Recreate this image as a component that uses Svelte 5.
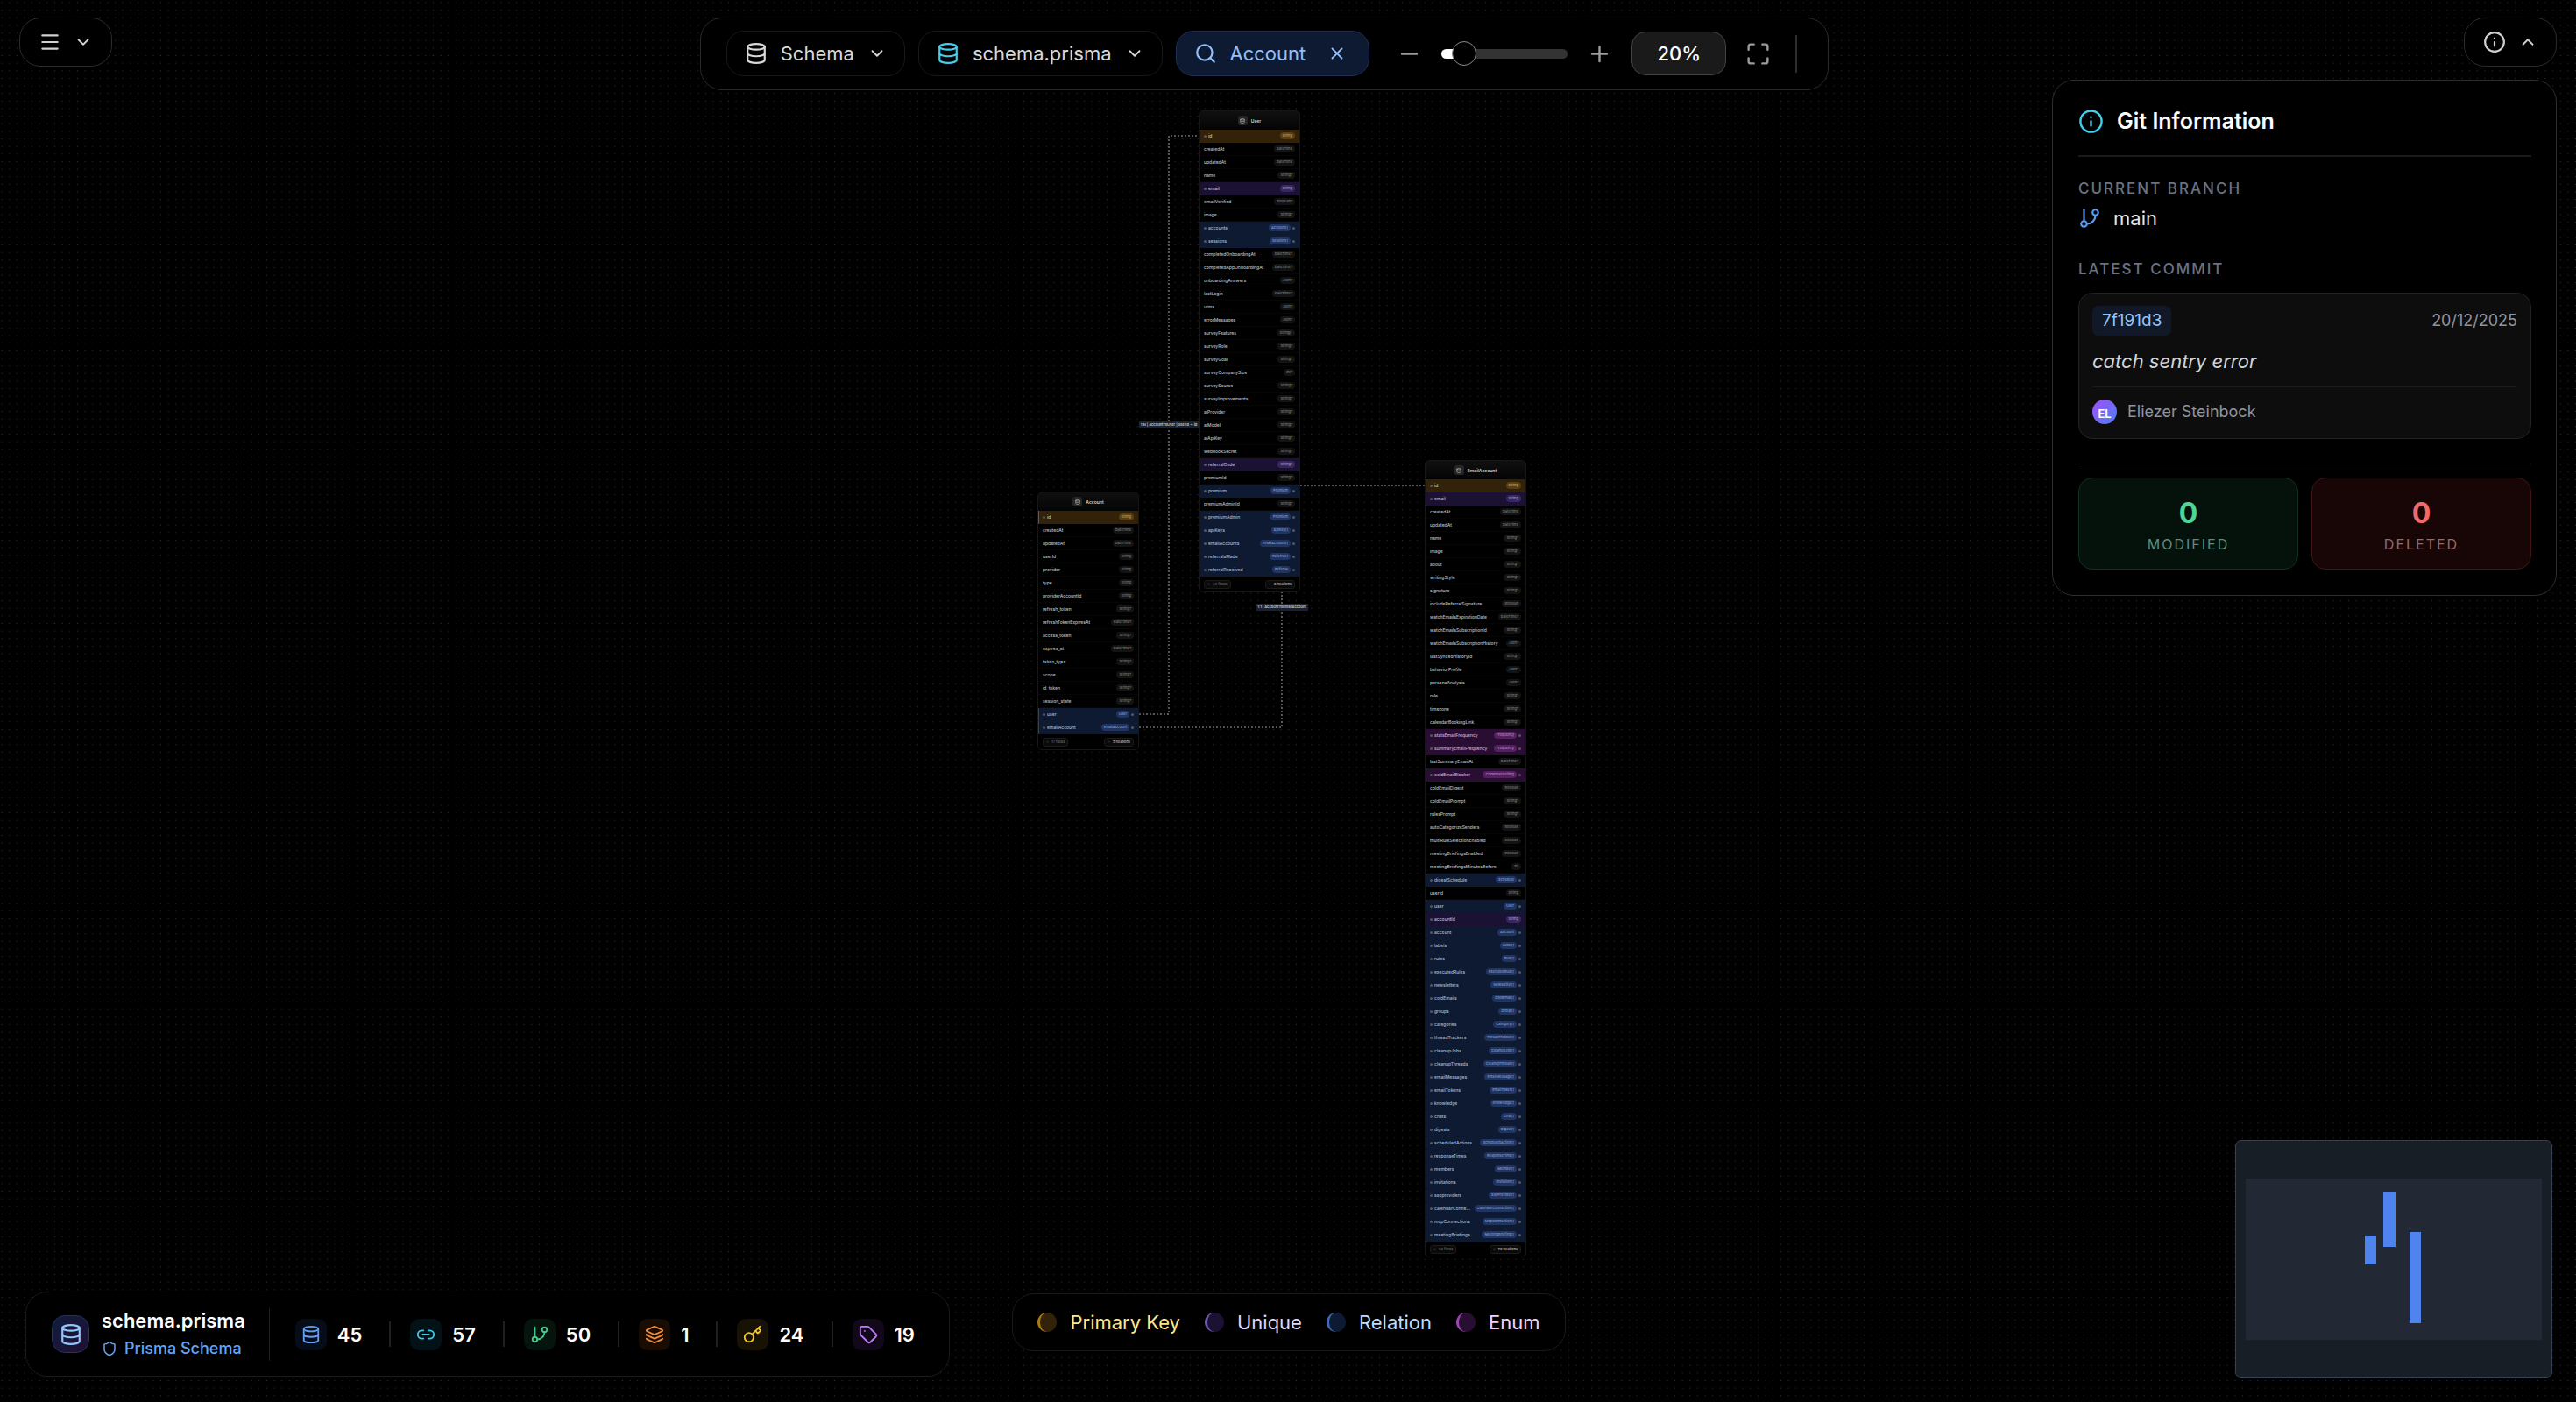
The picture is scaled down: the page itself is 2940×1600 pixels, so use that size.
<script lang="ts">
	type Kind = 'pk' | 'unique' | 'relation' | 'enum' | '';
	type Field = { name: string; type: string; kind: Kind };
	type Model = { name: string; x: number; y: number; relations: number; fields: Field[] };

	const kinds: Record<string, Kind> = { '*': 'pk', '!': 'unique', '>': 'relation', '#': 'enum' };

	// One "name:type" per field; the first character marks the kind
	function parse(source: string): Field[] {
		return source
			.trim()
			.split(/\s+/)
			.map((entry) => {
				const kind = kinds[entry[0]] ?? '';
				const [name, type] = (kind ? entry.slice(1) : entry).split(':');
				return { name, type, kind };
			});
	}

	const models: Model[] = [
		{
			name: 'User',
			x: 1368,
			y: 126,
			relations: 8,
			fields: parse(`
				*id:String createdAt:DateTime updatedAt:DateTime name:String? !email:String
				emailVerified:Boolean? image:String? >accounts:Account[] >sessions:Session[]
				completedOnboardingAt:DateTime? completedAppOnboardingAt:DateTime?
				onboardingAnswers:Json? lastLogin:DateTime? utms:Json? errorMessages:Json?
				surveyFeatures:String[] surveyRole:String? surveyGoal:String?
				surveyCompanySize:Int? surveySource:String? surveyImprovements:String?
				aiProvider:String? aiModel:String? aiApiKey:String? webhookSecret:String?
				!referralCode:String? premiumId:String? >premium:Premium premiumAdminId:String?
				>premiumAdmin:Premium >apiKeys:ApiKey[] >emailAccounts:EmailAccount[]
				>referralsMade:Referral[] >referralReceived:Referral
			`),
		},
		{
			name: 'Account',
			x: 1184,
			y: 561,
			relations: 2,
			fields: parse(`
				*id:String createdAt:DateTime updatedAt:DateTime userId:String provider:String
				type:String providerAccountId:String refresh_token:String?
				refreshTokenExpiresAt:DateTime? access_token:String? expires_at:DateTime?
				token_type:String? scope:String? id_token:String? session_state:String?
				>user:User >emailAccount:EmailAccount
			`),
		},
		{
			name: 'EmailAccount',
			x: 1626,
			y: 525,
			relations: 28,
			fields: parse(`
				*id:String !email:String createdAt:DateTime updatedAt:DateTime name:String?
				image:String? about:String? writingStyle:String? signature:String?
				includeReferralSignature:Boolean watchEmailsExpirationDate:DateTime?
				watchEmailsSubscriptionId:String? watchEmailsSubscriptionHistory:Json?
				lastSyncedHistoryId:String? behaviorProfile:Json? personaAnalysis:Json?
				role:String? timezone:String? calendarBookingLink:String?
				#statsEmailFrequency:Frequency #summaryEmailFrequency:Frequency
				lastSummaryEmailAt:DateTime? #coldEmailBlocker:ColdEmailSetting
				coldEmailDigest:Boolean coldEmailPrompt:String? rulesPrompt:String?
				autoCategorizeSenders:Boolean multiRuleSelectionEnabled:Boolean
				meetingBriefingsEnabled:Boolean meetingBriefingsMinutesBefore:Int
				>digestSchedule:Schedule userId:String >user:User !accountId:String
				>account:Account >labels:Label[] >rules:Rule[] >executedRules:ExecutedRule[]
				>newsletters:Newsletter[] >coldEmails:ColdEmail[] >groups:Group[]
				>categories:Category[] >threadTrackers:ThreadTracker[]
				>cleanupJobs:CleanupJob[] >cleanupThreads:CleanupThread[]
				>emailMessages:EmailMessage[] >emailTokens:EmailToken[]
				>knowledge:Knowledge[] >chats:Chat[] >digests:Digest[]
				>scheduledActions:ScheduledAction[] >responseTimes:ResponseTime[]
				>members:Member[] >invitations:Invitation[] >ssoproviders:SsoProvider[]
				>calendarConnections:CalendarConnection[] >mcpConnections:McpConnection[]
				>meetingBriefings:MeetingBriefing[]
			`),
		},
	];

	const edges = [
		{ path: 'M1300 815H1334V155H1368', label: '1:N | AccountToUser | userId → id', x: 1334, y: 485 },
		{ path: 'M1300 830H1463V554H1626', label: '1:1 | AccountToEmailAccount', x: 1463, y: 693 },
	];

	const stats = [
		{ icon: 'database', value: 45, tone: 'blue', label: 'Models' },
		{ icon: 'link', value: 57, tone: 'cyan', label: 'Relations' },
		{ icon: 'branch', value: 50, tone: 'green', label: 'Connections' },
		{ icon: 'layers', value: 1, tone: 'orange', label: 'Layers' },
		{ icon: 'key', value: 24, tone: 'yellow', label: 'Keys' },
		{ icon: 'tag', value: 19, tone: 'purple', label: 'Enums' },
	];

	const legend: { name: string; kind: Kind }[] = [
		{ name: 'Primary Key', kind: 'pk' },
		{ name: 'Unique', kind: 'unique' },
		{ name: 'Relation', kind: 'relation' },
		{ name: 'Enum', kind: 'enum' },
	];

	const icons: Record<string, string[]> = {
		menu: ['M4 5h16', 'M4 12h16', 'M4 19h16'],
		down: ['m6 9 6 6 6-6'],
		up: ['m18 15-6-6-6 6'],
		database: [
			'M3 5a9 3 0 1 0 18 0a9 3 0 1 0-18 0',
			'M3 5v14a9 3 0 0 0 18 0V5',
			'M3 12a9 3 0 0 0 18 0',
		],
		search: ['M3 11a8 8 0 1 0 16 0a8 8 0 1 0-16 0', 'm21 21-4.3-4.3'],
		close: ['M18 6 6 18', 'm6 6 12 12'],
		minus: ['M5 12h14'],
		plus: ['M5 12h14', 'M12 5v14'],
		maximize: [
			'M8 3H5a2 2 0 0 0-2 2v3',
			'M21 8V5a2 2 0 0 0-2-2h-3',
			'M3 16v3a2 2 0 0 0 2 2h3',
			'M16 21h3a2 2 0 0 0 2-2v-3',
		],
		info: ['M2 12a10 10 0 1 0 20 0a10 10 0 1 0-20 0', 'M12 16v-4', 'M12 8h.01'],
		branch: [
			'M6 3v12',
			'M15 6a3 3 0 1 0 6 0a3 3 0 1 0-6 0',
			'M3 18a3 3 0 1 0 6 0a3 3 0 1 0-6 0',
			'M18 9a9 9 0 0 1-9 9',
		],
		link: ['M9 17H7A5 5 0 0 1 7 7h2', 'M15 7h2a5 5 0 1 1 0 10h-2', 'M8 12h8'],
		layers: [
			'M12.83 2.18a2 2 0 0 0-1.66 0L2.6 6.08a1 1 0 0 0 0 1.83l8.58 3.91a2 2 0 0 0 1.66 0l8.58-3.9a1 1 0 0 0 0-1.83z',
			'M2 12a1 1 0 0 0 .58.91l8.6 3.91a2 2 0 0 0 1.65 0l8.58-3.9A1 1 0 0 0 22 12',
			'M2 17a1 1 0 0 0 .58.91l8.6 3.91a2 2 0 0 0 1.65 0l8.58-3.9A1 1 0 0 0 22 17',
		],
		key: [
			'm15.5 7.5 2.3 2.3a1 1 0 0 0 1.4 0l2.1-2.1a1 1 0 0 0 0-1.4L19 4',
			'm21 2-9.6 9.6',
			'M2 15.5a5.5 5.5 0 1 0 11 0a5.5 5.5 0 1 0-11 0',
		],
		tag: [
			'M12.586 2.586A2 2 0 0 0 11.172 2H4a2 2 0 0 0-2 2v7.172a2 2 0 0 0 .586 1.414l8.704 8.704a2.426 2.426 0 0 0 3.42 0l6.58-6.58a2.426 2.426 0 0 0 0-3.42z',
			'M7.5 7.5h.01',
		],
		shield: [
			'M20 13c0 5-3.5 7.5-7.66 8.95a1 1 0 0 1-.67-.01C7.5 20.5 4 18 4 13V6a1 1 0 0 1 1-1c2 0 4.5-1.2 6.24-2.72a1.17 1.17 0 0 1 1.52 0C14.51 3.81 17 5 19 5a1 1 0 0 1 1 1z',
		],
	};

	const zoomMin = 10;
	const zoomMax = 110;
	let zoom = $state(20);
	let gitOpen = $state(true);
	const zoomFill = $derived(((zoom - zoomMin) / (zoomMax - zoomMin)) * 100);
</script>

{#snippet icon(name: string, size: string)}
	<svg class="icon {size}" viewBox="0 0 24 24" aria-hidden="true">
		{#each icons[name] as d}
			<path {d} />
		{/each}
	</svg>
{/snippet}

<main class="app">
	<div class="canvas">
		<svg class="wires" aria-hidden="true">
			<defs>
				<pattern id="dots" x="-2.3" y="-1.3" width="8.64" height="8.64" patternUnits="userSpaceOnUse">
					<circle cx="4.32" cy="4.32" r="0.5" />
				</pattern>
			</defs>
			<rect width="100%" height="100%" fill="url(#dots)" />
			{#each edges as edge}
				<path d={edge.path} />
			{/each}
		</svg>

		{#each models as model}
			<section class="node" style:left="{model.x}px" style:top="{model.y}px">
				<header>
					<span class="node-icon">{@render icon('database', 'i6')}</span>
					<h3>{model.name}</h3>
				</header>
				<ul>
					{#each model.fields as field}
						<li class={field.kind}>
							{#if field.kind}<i></i>{/if}
							<span class="name">{field.name}</span>
							<span class="type">{field.type}</span>
							{#if field.kind === 'relation' || field.kind === 'enum'}<i></i>{/if}
						</li>
					{/each}
				</ul>
				<footer>
					<span><i></i>{model.fields.length} fields</span>
					<span class="strong"><i></i>{model.relations} relations</span>
				</footer>
			</section>
		{/each}

		{#each edges as edge}
			<span class="edge-label" style:left="{edge.x}px" style:top="{edge.y}px">{edge.label}</span>
		{/each}
	</div>

	<div class="top">
		<div>
			<button class="round" type="button" aria-label="Menu">
				{@render icon('menu', 'i26')}
				{@render icon('down', 'i22')}
			</button>
		</div>

		<div class="toolbar" role="toolbar" aria-label="Diagram tools">
			<button class="pick" type="button">
				{@render icon('database', 'i26')}
				Schema
				{@render icon('down', 'i22')}
			</button>
			<button class="pick file" type="button">
				{@render icon('database', 'i26')}
				schema.prisma
				{@render icon('down', 'i22')}
			</button>
			<button class="pick active" type="button">
				{@render icon('search', 'i26')}
				Account
				{@render icon('close', 'i22')}
			</button>
			<div class="zoom">
				<button class="tool" type="button" aria-label="Zoom out" onclick={() => (zoom -= 5)}>
					{@render icon('minus', 'i29')}
				</button>
				<input
					type="range"
					min={zoomMin}
					max={zoomMax}
					bind:value={zoom}
					aria-label="Zoom"
					style:--fill="{zoomFill}%"
				/>
				<button class="tool" type="button" aria-label="Zoom in" onclick={() => (zoom += 5)}>
					{@render icon('plus', 'i29')}
				</button>
				<button class="level" type="button">{zoom}%</button>
				<button class="tool" type="button" aria-label="Fit view">
					{@render icon('maximize', 'i29')}
				</button>
			</div>
			<span class="rule"></span>
		</div>

		<div class="side">
			<button
				class="round"
				type="button"
				aria-label="Git information"
				aria-expanded={gitOpen}
				onclick={() => (gitOpen = !gitOpen)}
			>
				{@render icon('info', 'i26')}
				{@render icon(gitOpen ? 'up' : 'down', 'i22')}
			</button>

			{#if gitOpen}
				<aside class="git">
					<h2>{@render icon('info', 'i29')}Git Information</h2>
					<h4>Current branch</h4>
					<p class="branch">{@render icon('branch', 'i26')}main</p>
					<h4>Latest commit</h4>
					<article class="commit">
						<div class="commit-head">
							<code>7f191d3</code>
							<time datetime="2025-12-20">20/12/2025</time>
						</div>
						<p class="message">catch sentry error</p>
						<div class="author"><span class="avatar">EL</span>Eliezer Steinbock</div>
					</article>
					<div class="changes">
						<div class="change modified"><strong>0</strong><span>Modified</span></div>
						<div class="change deleted"><strong>0</strong><span>Deleted</span></div>
					</div>
				</aside>
			{/if}
		</div>
	</div>

	<div class="bottom">
		<div class="status">
			<span class="logo">{@render icon('database', 'i26')}</span>
			<div class="file-info">
				<strong>schema.prisma</strong>
				<span>{@render icon('shield', 'i18')}Prisma Schema</span>
			</div>
			<ul class="stats">
				{#each stats as stat}
					<li title={stat.label}>
						<span class="badge {stat.tone}">{@render icon(stat.icon, 'i22')}</span>
						{stat.value}
					</li>
				{/each}
			</ul>
		</div>

		<ul class="legend">
			{#each legend as item}
				<li class={item.kind}><i></i>{item.name}</li>
			{/each}
		</ul>

		<svg class="minimap" viewBox="0 0 360 270" role="img" aria-label="Minimap">
			<rect class="view" x="11" y="43" width="338" height="184" />
			<rect x="147" y="108" width="13" height="33" />
			<rect x="168" y="58" width="14" height="63" />
			<rect x="198" y="104" width="13" height="104" />
		</svg>
	</div>
</main>

<style>
	:global(body) {
		margin: 0;
		background: #000;
	}

	.app {
		position: relative;
		display: flex;
		flex-direction: column;
		justify-content: space-between;
		min-height: 100vh;
		overflow: hidden;
		background: #000;
		color: #fff;
		font-family: Inter, 'Liberation Sans', sans-serif;
		font-size: 22px;
		line-height: 32px;
	}

	.app *,
	.app {
		box-sizing: border-box;
	}

	button {
		padding: 0;
		border: 0;
		background: none;
		color: inherit;
		font: inherit;
		cursor: pointer;
	}

	ul,
	h2,
	h3,
	h4,
	p {
		margin: 0;
		padding: 0;
		list-style: none;
		font-weight: inherit;
	}

	.icon {
		display: block;
		flex: none;
		fill: none;
		stroke: currentColor;
		stroke-width: 2;
		stroke-linecap: round;
		stroke-linejoin: round;
	}

	.i6 { width: 6px; height: 6px; }
	.i18 { width: 18px; height: 18px; }
	.i22 { width: 22px; height: 22px; }
	.i26 { width: 26px; height: 26px; }
	.i29 { width: 29px; height: 29px; }

	/* Canvas */
	.canvas {
		position: absolute;
		inset: 0;
	}

	.wires {
		display: block;
		width: 100%;
		height: 100%;
	}

	.wires circle {
		fill: #4a4a4a;
	}

	.wires > path {
		fill: none;
		stroke: #a2a6ad;
		stroke-width: 1;
		stroke-dasharray: 2 2;
	}

	.node {
		position: absolute;
		width: 116px;
		border: 1px solid #161616;
		border-radius: 5px;
		overflow: hidden;
		background: #000;
		font-size: 5px;
		line-height: 8px;
	}

	.node header {
		display: flex;
		align-items: center;
		justify-content: center;
		gap: 4px;
		height: 21px;
		background: linear-gradient(#101010, #040404);
		color: #d4d4d4;
	}

	.node h3 {
		font-size: 5px;
		font-weight: 600;
	}

	.node-icon {
		display: grid;
		place-items: center;
		width: 11px;
		height: 11px;
		border-radius: 3px;
		background: #262626;
	}

	.node li {
		display: flex;
		align-items: center;
		gap: 2px;
		height: 15px;
		padding: 0 5px;
		border-bottom: 1px solid #060606;
		color: #bcc2cc;
		font-weight: 500;
	}

	.node i {
		flex: none;
		width: 3px;
		height: 3px;
		border-radius: 50%;
		background: #55585f;
	}

	.name {
		flex: 1;
		min-width: 0;
		overflow: hidden;
		text-overflow: ellipsis;
		white-space: nowrap;
	}

	.type {
		padding: 0 3px;
		border-radius: 4px;
		background: #131313;
		color: #7c7c7c;
		font-size: 4px;
	}

	.node li.pk { border-color: #33220a; border-left: 1px solid #7a5a12; background: #33220a; color: #e0c878; }
	.node li.unique { border-color: #1b1233; border-left: 1px solid #4c3a86; background: #1b1233; color: #c4bde0; }
	.node li.relation { border-color: #0e1a31; border-left: 1px solid #24447e; background: #0e1a31; color: #a9bddb; }
	.node li.enum { border-color: #290d32; border-left: 1px solid #6d2a80; background: #290d32; color: #d0aedb; }
	.node li.pk, .node li.unique, .node li.relation, .node li.enum { padding-left: 4px; }
	.pk .type { background: #5a3d10; color: #bba66c; }
	.unique .type { background: #38265f; color: #9f92c8; }
	.relation .type { background: #203462; color: #859dcb; }
	.enum .type { background: #54205f; color: #b685c1; }

	.node footer {
		display: flex;
		align-items: center;
		justify-content: space-between;
		height: 17px;
		padding: 0 5px;
		color: #808080;
		font-size: 4px;
	}

	.node footer span {
		display: flex;
		align-items: center;
		gap: 3px;
		padding: 0 3px;
		border: 1px solid #1b1b1b;
		border-radius: 3px;
		background: #0a0a0a;
	}

	.node footer .strong {
		color: #c5c5c5;
		font-weight: 500;
	}

	.node footer i {
		background: #1d1d1d;
	}

	.edge-label {
		position: absolute;
		transform: translate(-50%, -50%);
		padding: 0 2px;
		border-radius: 1px;
		background: #1b222d;
		color: #c9ced6;
		font-size: 4px;
		font-weight: 600;
		line-height: 8px;
		white-space: nowrap;
	}

	/* Top bar */
	.top {
		position: relative;
		display: grid;
		grid-template-columns: 1fr auto 1fr;
		align-items: start;
		padding: 20px 22px 0;
	}

	.round {
		display: flex;
		align-items: center;
		gap: 14px;
		height: 56px;
		padding: 0 21px;
		border: 1px solid #2b2b2b;
		border-radius: 24px;
		background: #000;
		color: #d1d1d1;
	}

	.toolbar {
		display: flex;
		align-items: center;
		gap: 15px;
		margin-right: 54px;
		padding: 14px 35px 15px 29px;
		border: 1px solid #2b2b2b;
		border-radius: 25px;
		background: #000;
	}

	.pick {
		display: flex;
		align-items: center;
		gap: 15px;
		height: 52px;
		padding: 0 20px;
		border: 1px solid #191919;
		border-radius: 20px;
		color: #d8d8d8;
	}

	.file .icon:first-child {
		color: #45cdec;
	}

	.active {
		padding-right: 25px;
		border-color: #1f2f4f;
		background: #0e1a31;
		color: #93c0fb;
	}

	.active .icon:last-child {
		margin-left: 10px;
	}

	.zoom {
		display: flex;
		align-items: center;
		gap: 11px;
		margin-left: 5px;
	}

	.tool {
		display: grid;
		place-items: center;
		width: 51px;
		height: 51px;
		color: #9b9b9b;
	}

	.level {
		width: 108px;
		height: 50px;
		border: 1px solid #424242;
		border-radius: 16px;
		background: #1a1a1a;
		color: #fff;
		font-weight: 500;
	}

	input[type='range'] {
		appearance: none;
		width: 144px;
		height: 11px;
		margin: 0;
		border-radius: 6px;
		background: linear-gradient(to right, #fff calc(var(--fill) + 8px), #333 0);
	}

	input[type='range']::-webkit-slider-thumb {
		appearance: none;
		width: 28px;
		height: 28px;
		border: 1px solid #8a8a8a;
		border-radius: 50%;
		background: #000;
	}

	.rule {
		width: 2px;
		height: 43px;
		margin-left: 2px;
		background: #2e2e2e;
	}

	.side {
		display: flex;
		flex-direction: column;
		align-items: flex-end;
		gap: 15px;
	}

	/* Git panel */
	.git {
		width: 576px;
		padding: 29px 28px 29px 29px;
		border: 1px solid #2e2e2e;
		border-radius: 25px;
		background: #000;
	}

	.git h2 {
		display: flex;
		align-items: center;
		gap: 15px;
		padding-bottom: 22px;
		border-bottom: 2px solid #1a1a1a;
		font-size: 25px;
		font-weight: 600;
		line-height: 34px;
	}

	.git h2 .icon {
		color: #45cdec;
	}

	.git h4 {
		margin-top: 22px;
		color: #6b7280;
		font-size: 17px;
		font-weight: 500;
		letter-spacing: 2px;
		line-height: 28px;
		text-transform: uppercase;
	}

	.branch {
		display: flex;
		align-items: center;
		gap: 14px;
		margin-top: 4px;
		color: #e5e5e5;
	}

	.branch .icon {
		color: #5b9bf5;
	}

	.branch + h4 {
		margin-top: 28px;
	}

	.commit {
		margin-top: 13px;
		padding: 14px 15px;
		border: 1px solid #222;
		border-radius: 16px;
		background: #0d0d0d;
		color: #8f949e;
		font-size: 18px;
	}

	.commit-head {
		display: flex;
		align-items: center;
		justify-content: space-between;
	}

	.commit code {
		padding: 1px 11px;
		border-radius: 7px;
		background: #111827;
		color: #93c5fd;
		font-family: inherit;
		font-size: 19px;
	}

	.message {
		margin-top: 13px;
		padding-bottom: 13px;
		border-bottom: 1px solid #1b1b1b;
		color: #d1d5db;
		font-size: 22px;
		font-style: italic;
	}

	.author {
		display: flex;
		align-items: center;
		gap: 12px;
		margin-top: 12px;
	}

	.avatar {
		display: grid;
		place-items: center;
		width: 28px;
		height: 28px;
		border-radius: 50%;
		background: linear-gradient(135deg, #a34ff5, #4a80f6);
		color: #fff;
		font-size: 13px;
		font-weight: 700;
	}

	.changes {
		display: flex;
		gap: 15px;
		margin-top: 28px;
		padding-top: 15px;
		border-top: 1px solid #1c1c1c;
	}

	.change {
		display: flex;
		flex: 1;
		flex-direction: column;
		align-items: center;
		padding: 20px 0 13px;
		border: 1px solid;
		border-radius: 16px;
	}

	.change strong {
		font-size: 32px;
		font-weight: 700;
		line-height: 40px;
	}

	.change span {
		font-size: 16px;
		letter-spacing: 2px;
		line-height: 30px;
		text-transform: uppercase;
	}

	.modified { border-color: #12301f; background: #05120c; color: #4fd598; }
	.modified span { color: #5f8d77; }
	.deleted { border-color: #431414; background: #180607; color: #f06a6a; }
	.deleted span { color: #96696a; }

	/* Bottom bar */
	.bottom {
		position: relative;
		display: grid;
		grid-template-columns: 1fr auto 1fr;
		align-items: end;
		padding: 0 27px 27px 29px;
	}

	.status {
		display: flex;
		align-items: center;
		justify-self: start;
		height: 97px;
		margin-bottom: 2px;
		padding: 0 39px 0 29px;
		border: 1px solid #1a1a1a;
		border-radius: 25px;
		background: #000;
	}

	.logo {
		display: grid;
		place-items: center;
		width: 43px;
		height: 43px;
		border: 1px solid #1e3566;
		border-radius: 15px;
		background: linear-gradient(135deg, #0f1d3c, #210f35);
		color: #93c5fd;
	}

	.file-info {
		display: flex;
		flex-direction: column;
		margin-left: 14px;
	}

	.file-info strong {
		font-weight: 600;
	}

	.file-info span {
		display: flex;
		align-items: center;
		gap: 8px;
		color: #60a5fa;
		font-size: 18px;
		font-weight: 500;
	}

	.stats {
		display: flex;
		align-items: center;
		height: 60px;
		margin-left: 27px;
		padding-left: 29px;
		border-left: 1px solid #1f1f1f;
	}

	.stats li {
		display: flex;
		align-items: center;
		gap: 12px;
		font-weight: 600;
	}

	.stats li + li::before {
		content: '';
		width: 2px;
		height: 29px;
		margin: 0 10px 0 31px;
		background: #1f1f1f;
	}

	.badge {
		display: grid;
		place-items: center;
		width: 36px;
		height: 36px;
		border-radius: 10px;
	}

	.blue { background: #060d18; color: #60a0f8; }
	.cyan { background: #031216; color: #3fc8e4; }
	.green { background: #05140d; color: #45c98a; }
	.orange { background: #190c03; color: #f28b38; }
	.yellow { background: #171203; color: #f5c518; }
	.purple { background: #110819; color: #bd7df8; }

	.legend {
		display: flex;
		align-items: center;
		gap: 28px;
		height: 66px;
		margin-bottom: 31px;
		padding: 0 28px;
		border: 1px solid #1a1a1a;
		border-radius: 25px;
		background: #000;
	}

	.legend li {
		display: flex;
		align-items: center;
		gap: 15px;
	}

	.legend i {
		width: 22px;
		height: 22px;
		border-left: 3px solid;
		border-radius: 50%;
	}

	.legend .pk { color: #fde68a; }
	.legend .pk i { border-color: #a87a12; background: #33220a; }
	.legend .unique { color: #ddd6fe; }
	.legend .unique i { border-color: #6f57b0; background: #1b1233; }
	.legend .relation { color: #bfdbfe; }
	.legend .relation i { border-color: #3f6db5; background: #0e1a31; }
	.legend .enum { color: #f5d0fe; }
	.legend .enum i { border-color: #9c46b0; background: #290d32; }

	.minimap {
		justify-self: end;
		width: 362px;
		height: 272px;
		border: 1px solid #374151;
		border-radius: 7px;
		background: #171e26;
	}

	.minimap rect {
		fill: #4f83ee;
	}

	.minimap .view {
		fill: #222834;
	}
</style>
